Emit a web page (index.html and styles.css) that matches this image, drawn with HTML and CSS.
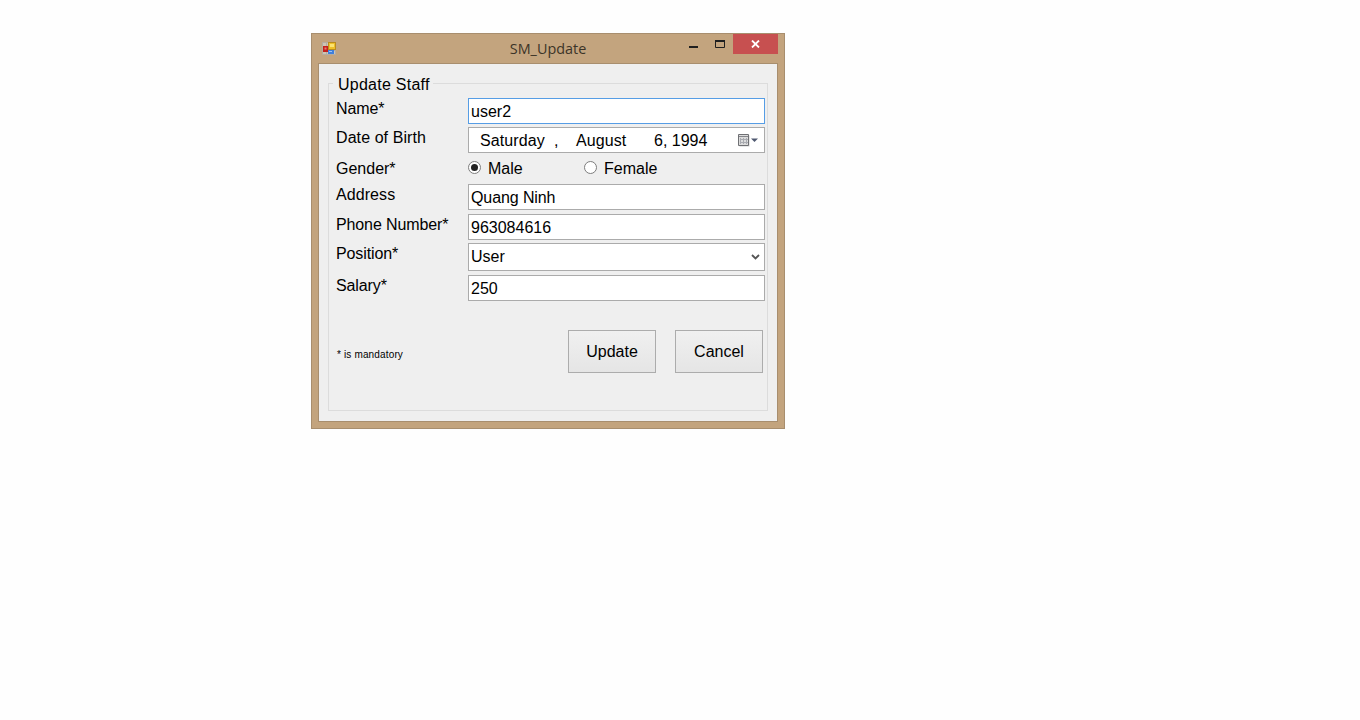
FILE: index.html
```html
<!DOCTYPE html>
<html lang="en">
<head>
<meta charset="utf-8">
<title>SM_Update</title>
<link rel="stylesheet" href="styles.css">
</head>
<body>
<div class="window">
  <div class="titlebar">
    <svg class="app-icon" width="14" height="13" viewBox="0 0 14 13" aria-hidden="true">
      <path d="M0.5 0.5H13.5V12.5H0.5Z" fill="#cfc4b2"/>
      <path d="M0.5 0.5H13.5V12.5H0.5Z M0.5 4.5H13.5 M0.5 8.5H13.5 M4.5 0.5V12.5 M9.5 0.5V12.5" fill="none" stroke="#b3aca2"/>
      <rect x="6.5" y="0.5" width="7" height="7" fill="#efc029" stroke="#b98c1e"/>
      <rect x="8" y="2" width="4" height="3" fill="#fbe373"/>
      <rect x="1" y="4" width="5" height="6" fill="#c4211c"/>
      <rect x="2.5" y="5.5" width="2" height="2" fill="#ec7d6c"/>
      <rect x="6" y="8" width="6" height="4" fill="#3f7fdc"/>
      <rect x="7" y="9" width="3" height="1" fill="#9cc4f4"/>
    </svg>
    <div class="title">SM_Update</div>
    <div class="controls">
      <div class="ctl ctl-min"><svg width="9" height="2" viewBox="0 0 9 2" aria-hidden="true"><rect width="9" height="2" fill="#1f1f1f"/></svg></div>
      <div class="ctl ctl-max"><svg width="10" height="8" viewBox="0 0 10 8" aria-hidden="true"><path d="M0.5 0.5H9.5V7.5H0.5Z" fill="none" stroke="#1f1f1f"/><rect width="10" height="2" fill="#1f1f1f"/></svg></div>
      <div class="ctl ctl-close"><svg width="9" height="8" viewBox="0 0 9 8" aria-hidden="true"><path d="M1 0.5L8 7.5M8 0.5L1 7.5" stroke="#fff" stroke-width="1.8" fill="none"/></svg></div>
    </div>
  </div>
  <div class="client">
    <fieldset class="group">
      <legend class="group-title">Update Staff</legend>
      <form class="form">
        <label class="lbl">Name*</label>
        <input class="field field-focus" type="text" value="user2">

        <label class="lbl lbl-wide">Date of Birth</label>
        <div class="field field-date">
          <span class="d-day">Saturday</span><span class="d-comma">,</span><span class="d-month">August</span><span>6, 1994</span>
          <svg class="cal" width="20" height="13" viewBox="0 0 20 13" aria-hidden="true">
            <rect x="1.5" y="1.5" width="10" height="11" fill="#cfcfcf"/>
            <path d="M0.5 0.5H10.5V11.5H0.5Z" fill="#dcdcdc" stroke="#6f7074"/>
            <path d="M1 2.5H10" stroke="#85868b"/>
            <path d="M2.5 4V10M5.5 4V10M8.5 4V10M2 5.5H10M2 8.5H10" stroke="#a9abb1"/>
            <path d="M13 4.5H20L16.5 8Z" fill="#4f5870"/>
          </svg>
        </div>

        <label class="lbl lbl-gender">Gender*</label>
        <div class="radios">
          <span class="radio-opt radio-male"><span class="radio radio-on"></span>Male</span>
          <span class="radio-opt"><span class="radio"></span>Female</span>
        </div>

        <label class="lbl lbl-wide">Address</label>
        <input class="field field-tight" type="text" value="Quang Ninh">

        <label class="lbl">Phone Number*</label>
        <input class="field" type="text" value="963084616">

        <label class="lbl">Position*</label>
        <div class="field field-select">
          <span>User</span>
          <svg width="9" height="6" viewBox="0 0 9 6" aria-hidden="true"><path d="M1 1L4.5 4.5L8 1" fill="none" stroke="#555" stroke-width="1.8"/></svg>
        </div>

        <label class="lbl">Salary*</label>
        <input class="field" type="text" value="250">
      </form>
      <div class="footer">
        <span class="note">* is mandatory</span>
        <div class="buttons">
          <button class="btn" type="button">Update</button>
          <button class="btn" type="button">Cancel</button>
        </div>
      </div>
    </fieldset>
  </div>
</div>
</body>
</html>
```
FILE: styles.css
```css
* { box-sizing: border-box; }
html, body { margin: 0; padding: 0; background: #fefefe; }
body {
  padding: 33px 0 0 311px;
  height: 720px;
  overflow: hidden;
  font-family: "Liberation Sans", Arial, sans-serif;
  font-size: 16px;
  color: #000;
}
.window {
  width: 474px;
  height: 396px;
  background: #c3a47e;
  border: 1px solid #a88e6e;
  display: flex;
  flex-direction: column;
}
.titlebar {
  height: 29px;
  flex: none;
  display: grid;
  grid-template-columns: 1fr auto 1fr;
  align-items: start;
  position: relative;
}
.app-icon { margin: 8px 0 0 10px; justify-self: start; }
.title {
  font-family: "Open Sans", sans-serif;
  font-size: 14.4px;
  line-height: 20px;
  padding-top: 5px;
  color: #3c3428;
}
.controls { display: flex; justify-self: end; margin-right: 6px; }
.ctl { height: 20px; display: flex; justify-content: center; }
.ctl-min { width: 26px; align-items: flex-start; padding-top: 12px; }
.ctl-max { width: 27px; align-items: flex-start; padding-top: 6px; }
.ctl-close { width: 45px; background: #c75050; align-items: center; }
.client {
  flex: 1;
  margin: 0 6px 7px;
  background: #efefef;
  border: 1px solid #a88e6e;
  padding: 8px 9px 10px 9px;
  display: flex;
}
.group {
  margin: 0;
  width: 440px;
  height: 339px;
  border: 1px solid #dcdcdc;
  padding: 0 0 0 7px;
  min-width: 0;
}
.group-title {
  margin-left: -3px;
  padding: 4px 3px 0 5px;
  line-height: 18px;
  font-size: 16px;
  letter-spacing: 0.25px;
}
.form {
  display: grid;
  grid-template-columns: 132px 297px;
  grid-template-rows: 29px 29px 28px 30px 29px 32px 26px;
  align-items: start;
  margin-top: 4px;
}
.lbl { line-height: 18px; padding-top: 2px; color: #000; letter-spacing: -0.12px; }
.lbl-wide { letter-spacing: 0.08px; }
.lbl-gender { padding-top: 4px; letter-spacing: 0; }
.field {
  display: block;
  width: 297px;
  height: 26px;
  margin: 0;
  background: #fff;
  border: 1px solid #ababab;
  border-radius: 0;
  padding: 1px 2px 0;
  font-family: inherit;
  font-size: 16px;
  color: #000;
  outline: none;
}
.field-focus { border-color: #569de5; }
.field-tight { letter-spacing: -0.1px; }
.field-date {
  display: flex;
  align-items: center;
  padding: 1px 6px 0 11px;
  position: relative;
  line-height: 18px;
}
.d-day { width: 74px; letter-spacing: 0.1px; }
.d-comma { width: 22px; }
.d-month { width: 78px; letter-spacing: 0.1px; }
.cal { margin-left: auto; margin-top: -1px; }
.radios { display: flex; align-items: center; height: 25px; padding-top: 0; }
.radio-opt { display: inline-flex; align-items: center; line-height: 18px; }
.radio-male { width: 116px; }
.radio {
  width: 13px;
  height: 13px;
  border: 1px solid #7d7d7d;
  border-radius: 50%;
  background: #fff;
  margin: -2px 7px 0 0;
  position: relative;
  flex: none;
}
.radio-on::after {
  content: "";
  position: absolute;
  left: 2px;
  top: 2px;
  width: 7px;
  height: 7px;
  border-radius: 50%;
  background: #222;
}
.field-select {
  height: 28px;
  display: flex;
  align-items: center;
  justify-content: space-between;
  padding: 0 4px 0 2px;
}
.footer {
  display: flex;
  justify-content: space-between;
  align-items: center;
  margin-top: 29px;
  height: 43px;
  padding-left: 1px;
  width: 427px;
}
.note { font-size: 10px; line-height: 12px; padding-top: 6px; letter-spacing: 0.15px; }
.buttons { display: flex; gap: 19px; }
.btn {
  width: 88px;
  height: 43px;
  margin: 0;
  padding: 0;
  background: linear-gradient(#f0f0f0, #e5e5e5);
  border: 1px solid #acacac;
  border-radius: 0;
  font-family: inherit;
  font-size: 16px;
  color: #000;
}
```
